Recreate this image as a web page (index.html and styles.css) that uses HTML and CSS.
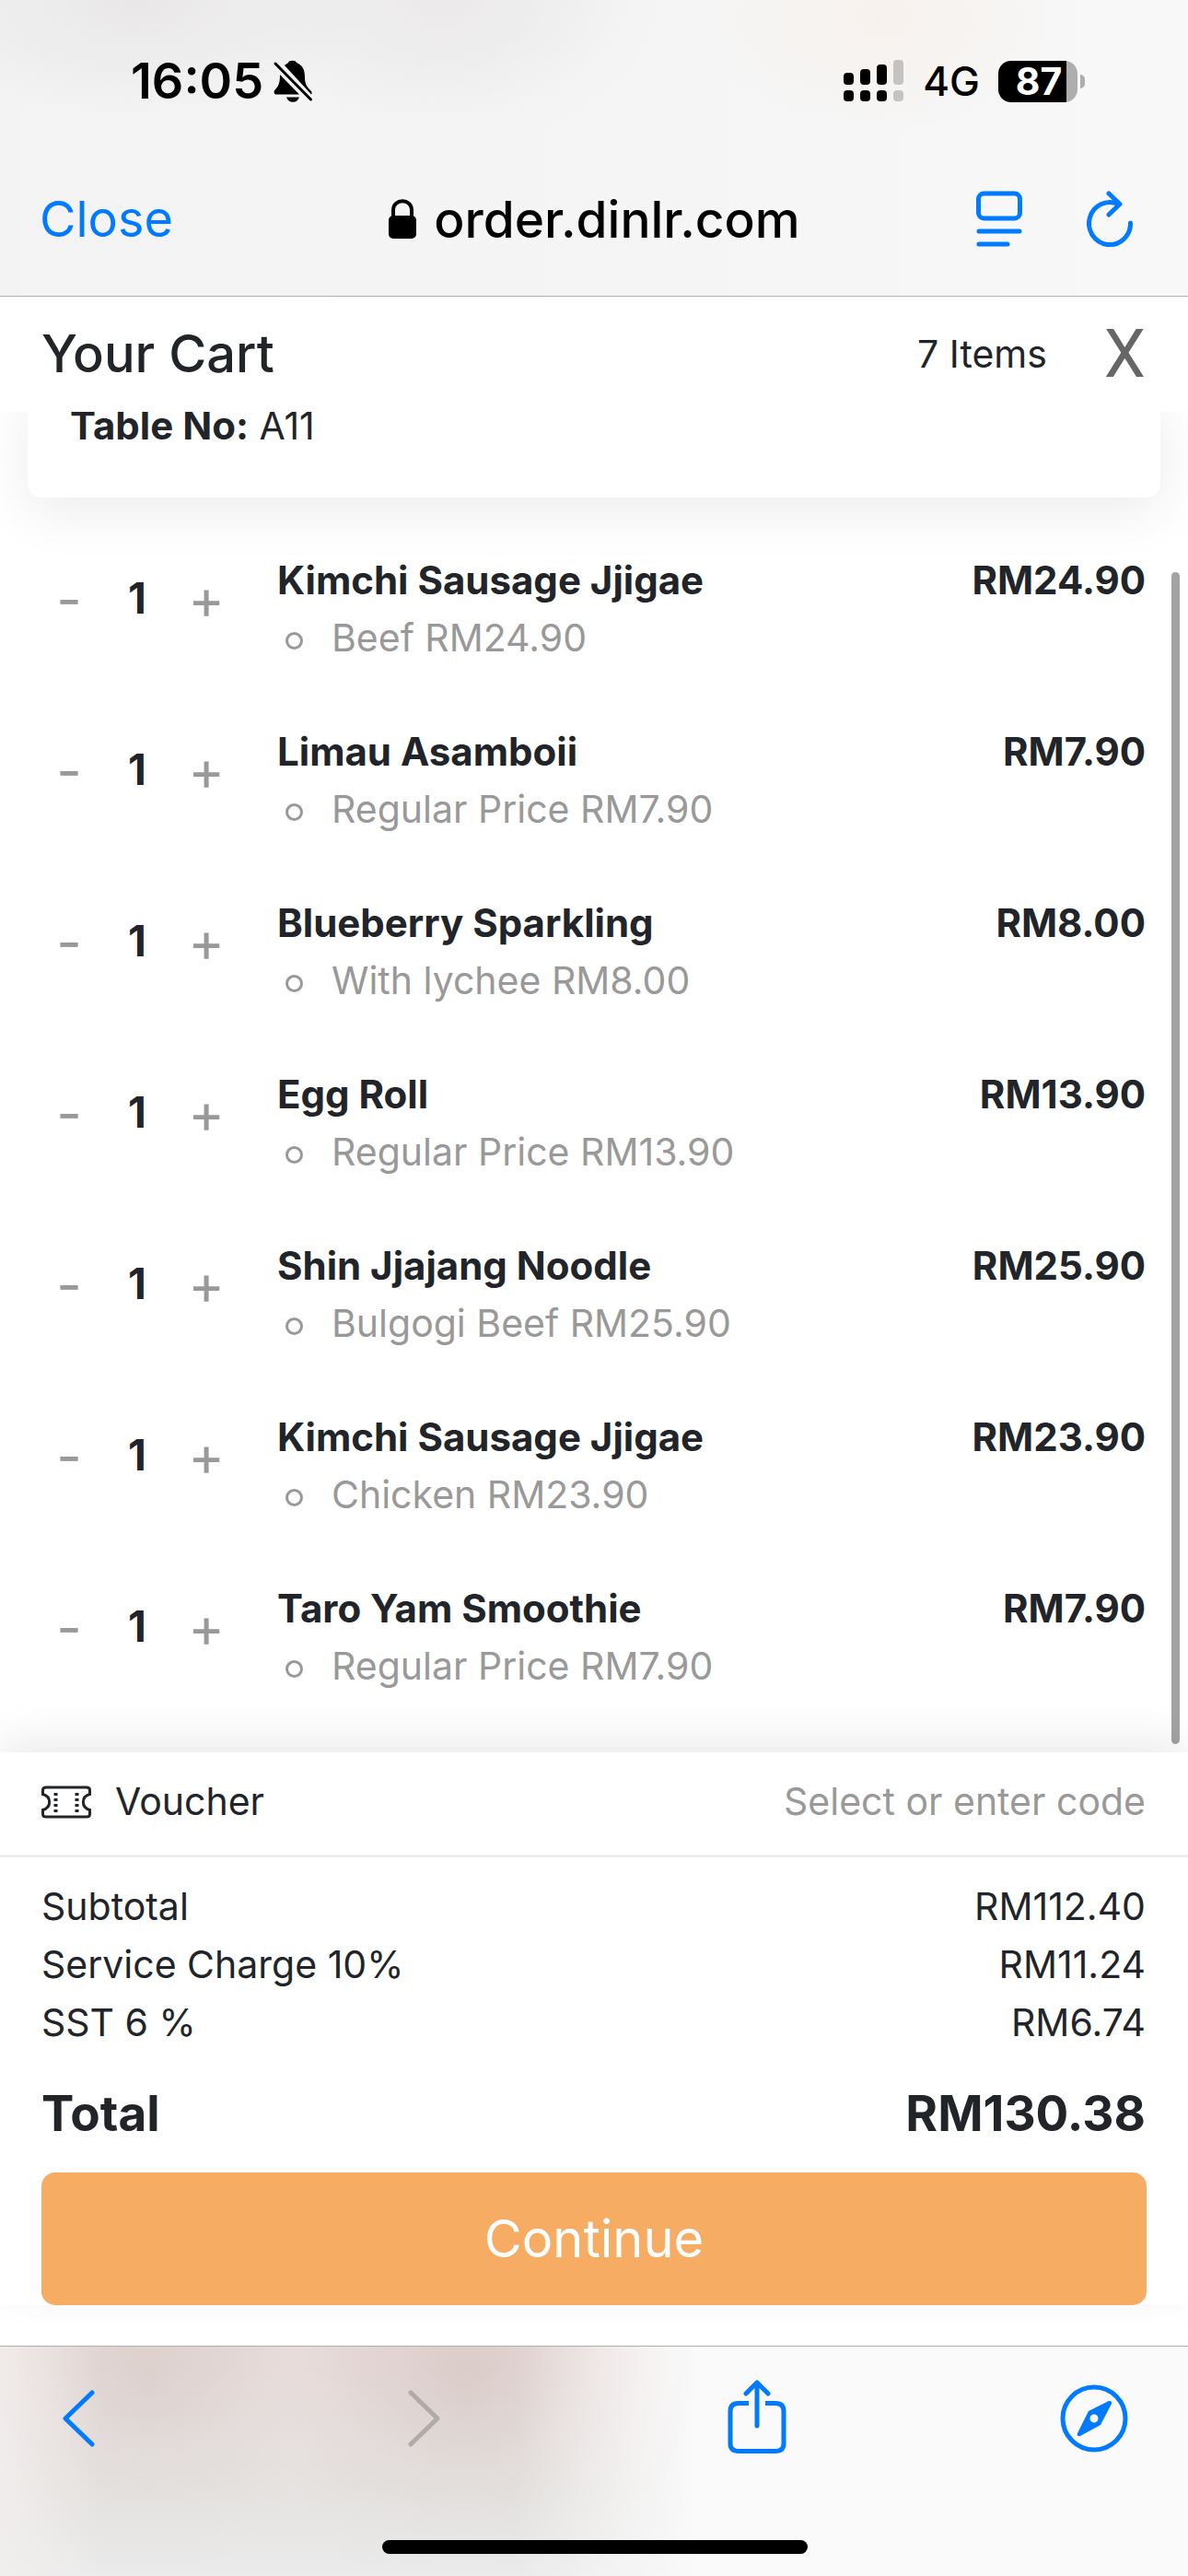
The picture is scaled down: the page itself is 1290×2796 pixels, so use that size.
FILE: index.html
```html
<!DOCTYPE html>
<html lang="en">
<head>
<meta charset="utf-8">
<meta name="viewport" content="width=device-width, initial-scale=1">
<title>Your Cart</title>
<link rel="stylesheet" href="styles.css">
</head>
<body>
<header class="browser-top">
  <div class="status">
    <div class="status-left">
      <span class="clock">16:05</span>
      <svg width="44" height="48" viewBox="0 0 44 48" aria-hidden="true">
        <path d="M13 7 C15 5 16.500 5 17 4 C18 1 25 1 26 4 C33 7 35 12 35 20 C35 27 37 30 42 35 C43 37 42.500 38 42 38.500 Z" fill="#000"/>
        <path d="M8 17 L29 38.500 H4 C1 38.500 1 35 3 33 C7 29 8 25 8 17 Z" fill="#000"/>
        <path d="M15 41.500 H29 C27 48.500 17 48.500 15 41.500 Z" fill="#000"/>
        <path d="M3 5 L41.500 44" stroke="#000" stroke-width="3" stroke-linecap="round"/>
      </svg>
    </div>
    <div class="status-right">
      <svg width="66" height="46" viewBox="0 0 66 46" aria-hidden="true">
        <g fill="#000">
          <rect x="0" y="14" width="11" height="13" rx="4"/><rect x="0" y="33" width="11" height="12" rx="4"/>
          <rect x="18" y="10" width="11" height="17" rx="4"/><rect x="18" y="33" width="11" height="12" rx="4"/>
          <rect x="36" y="5" width="11" height="22" rx="4"/><rect x="36" y="33" width="11" height="12" rx="4"/>
        </g>
        <g fill="#c4c3c2"><rect x="54" y="0" width="11" height="27" rx="4"/><rect x="54" y="33" width="11" height="12" rx="4"/></g>
      </svg>
      <span class="network">4G</span>
      <div class="battery"><span class="battery-level">87</span></div>
    </div>
  </div>
  <nav class="address">
    <a class="close-link" href="#">Close</a>
    <div class="site">
      <svg width="32" height="44" viewBox="0 0 32 44" aria-hidden="true">
        <path d="M6 20 V12 C6 -1 26 -1 26 12 V20" fill="none" stroke="#000" stroke-width="4"/>
        <rect x="1" y="18" width="30" height="25" rx="5" fill="#000"/>
      </svg>
      <span>order.dinlr.com</span>
    </div>
    <div class="address-tools">
      <button class="icon-button" aria-label="Reader view">
        <svg width="50" height="62" viewBox="0 0 50 62" fill="none" stroke="#007aff" stroke-width="5" stroke-linecap="round">
          <rect x="2.500" y="3" width="45" height="27" rx="6"/><path d="M3 44 H47 M3 58 H34"/>
        </svg>
      </button>
      <button class="icon-button" aria-label="Reload">
        <svg width="50" height="62" viewBox="0 0 50 62" fill="none" stroke="#007aff" stroke-width="5" stroke-linecap="round" stroke-linejoin="round">
          <path d="M47.500 35 A22.500 23 0 1 1 34 14.500"/><path d="M24 3 L36 14.500 L24 26"/>
        </svg>
      </button>
    </div>
  </nav>
</header>

<div class="cart-head">
  <h1>Your Cart</h1>
  <span class="count">7 Items</span>
  <button class="dismiss" aria-label="Close cart">X</button>
</div>

<main class="cart-body">
  <section class="table-card"><strong>Table No:</strong> A11</section>
  <ul class="items">
    <li class="item">
      <div class="qty"><button aria-label="Remove one">-</button><span>1</span><button aria-label="Add one">+</button></div>
      <div class="dish"><h2>Kimchi Sausage Jjigae</h2><ul><li>Beef RM24.90</li></ul></div>
      <strong>RM24.90</strong>
    </li>
    <li class="item">
      <div class="qty"><button aria-label="Remove one">-</button><span>1</span><button aria-label="Add one">+</button></div>
      <div class="dish"><h2>Limau Asamboii</h2><ul><li>Regular Price RM7.90</li></ul></div>
      <strong>RM7.90</strong>
    </li>
    <li class="item">
      <div class="qty"><button aria-label="Remove one">-</button><span>1</span><button aria-label="Add one">+</button></div>
      <div class="dish"><h2>Blueberry Sparkling</h2><ul><li>With lychee RM8.00</li></ul></div>
      <strong>RM8.00</strong>
    </li>
    <li class="item">
      <div class="qty"><button aria-label="Remove one">-</button><span>1</span><button aria-label="Add one">+</button></div>
      <div class="dish"><h2>Egg Roll</h2><ul><li>Regular Price RM13.90</li></ul></div>
      <strong>RM13.90</strong>
    </li>
    <li class="item">
      <div class="qty"><button aria-label="Remove one">-</button><span>1</span><button aria-label="Add one">+</button></div>
      <div class="dish"><h2>Shin Jjajang Noodle</h2><ul><li>Bulgogi Beef RM25.90</li></ul></div>
      <strong>RM25.90</strong>
    </li>
    <li class="item">
      <div class="qty"><button aria-label="Remove one">-</button><span>1</span><button aria-label="Add one">+</button></div>
      <div class="dish"><h2>Kimchi Sausage Jjigae</h2><ul><li>Chicken RM23.90</li></ul></div>
      <strong>RM23.90</strong>
    </li>
    <li class="item">
      <div class="qty"><button aria-label="Remove one">-</button><span>1</span><button aria-label="Add one">+</button></div>
      <div class="dish"><h2>Taro Yam Smoothie</h2><ul><li>Regular Price RM7.90</li></ul></div>
      <strong>RM7.90</strong>
    </li>
  </ul>
  <div class="scroll-thumb"></div>
</main>

<section class="checkout">
  <div class="voucher">
    <svg width="54" height="36" viewBox="0 0 54 36" fill="none" stroke="#212529" aria-hidden="true">
      <path d="M5 2 H49 Q52.500 2 52.500 5 V9.500 C43 12 43 24 52.500 26.500 V31 Q52.500 34 49 34 H5 Q1.500 34 1.500 31 V26.500 C11 24 11 12 1.500 9.500 V5 Q1.500 2 5 2 Z" stroke-width="3"/>
      <path d="M15.500 8 V31 M38.500 8 V31" stroke-width="4" stroke-dasharray="3 3"/>
    </svg>
    <label for="voucher-code">Voucher</label>
    <input id="voucher-code" type="text" placeholder="Select or enter code">
  </div>
  <dl class="summary">
    <div><dt>Subtotal</dt><dd>RM112.40</dd></div>
    <div><dt>Service Charge 10%</dt><dd>RM11.24</dd></div>
    <div><dt>SST 6 %</dt><dd>RM6.74</dd></div>
    <div class="total"><dt>Total</dt><dd>RM130.38</dd></div>
  </dl>
  <div class="action"><button class="continue">Continue</button></div>
</section>

<footer class="browser-bottom">
  <nav class="toolbar">
    <button class="icon-button" aria-label="Back">
      <svg width="36" height="84" viewBox="0 0 36 84" fill="none" stroke="#007aff" stroke-width="5" stroke-linecap="round" stroke-linejoin="round"><path d="M33 14 L4 42 L33 70"/></svg>
    </button>
    <button class="icon-button" aria-label="Forward" disabled>
      <svg width="36" height="84" viewBox="0 0 36 84" fill="none" stroke="#b2aaa8" stroke-width="5" stroke-linecap="round" stroke-linejoin="round"><path d="M3 14 L32 42 L3 70"/></svg>
    </button>
    <button class="icon-button" aria-label="Share">
      <svg width="64" height="84" viewBox="0 0 64 84" fill="none" stroke="#007aff" stroke-width="5" stroke-linecap="round" stroke-linejoin="round">
        <path d="M23 25.500 H12 Q3 25.500 3 34 V69 Q3 77.500 12 77.500 H52 Q61 77.500 61 69 V34 Q61 25.500 52 25.500 H41" stroke-linecap="butt"/>
        <path d="M32 3 V50 M20 15 L32 3 L44 15"/>
      </svg>
    </button>
    <button class="icon-button" aria-label="Open in browser">
      <svg width="74" height="84" viewBox="0 0 74 84">
        <circle cx="37" cy="42" r="34" fill="none" stroke="#007aff" stroke-width="5"/>
        <path d="M19 58 L31 34 L53 23 Q56.500 22.500 56 26 L44 49 L22 61 Q18 62 19 58 Z M37 37.500 A4.500 4.500 0 1 0 37 46.500 A4.500 4.500 0 1 0 37 37.500 Z" fill="#007aff" fill-rule="evenodd"/>
      </svg>
    </button>
  </nav>
  <div class="home-bar"></div>
</footer>
</body>
</html>
```
FILE: styles.css
```css
*, *::before, *::after { box-sizing: border-box; }

body {
  margin: 0;
  min-height: 100vh;
  display: flex;
  flex-direction: column;
  background: #fff;
  color: #212529;
  font-family: Inter, "Liberation Sans", sans-serif;
  font-size: 41px;
  line-height: 63px;
}

h1, h2, ul, dl, dd { margin: 0; padding: 0; }
ul { list-style: none; }
button { border: 0; padding: 0; background: none; font: inherit; color: inherit; }
svg { display: block; }
strong { font-size: 42px; font-weight: 700; }
.icon-button { display: flex; }

/* Browser chrome, top */
.browser-top {
  padding: 58px 43px 41px;
  border-bottom: 1px solid #b0b0b0;
  background:
    radial-gradient(ellipse 260px 130px at 150px 0, #e9e7e7, transparent),
    radial-gradient(ellipse 240px 150px at 480px 0, #ebe9e9, transparent),
    radial-gradient(ellipse 200px 120px at 960px 20px, #f7f1ed, transparent),
    linear-gradient(90deg, #f3f3f3, #f5f5f5 50%, #f8f8f8);
  color: #000;
}
.status {
  display: flex;
  justify-content: space-between;
  align-items: center;
  padding: 0 77px 0 99px;
  line-height: 60px;
}
.status-left { display: flex; align-items: center; gap: 10px; }
.clock { font-size: 54px; font-weight: 600; }
.status-right { display: flex; align-items: center; gap: 20px; }
.network { font-size: 44px; font-weight: 500; }
.battery {
  position: relative;
  width: 86px;
  height: 45px;
  padding-left: 2px;
  border-radius: 14px;
  background: linear-gradient(90deg, #000 74px, #aeaeae 74px);
  color: #fff;
  font-size: 41px;
  font-weight: 700;
  line-height: 45px;
  text-align: center;
}
.battery::after {
  content: "";
  position: absolute;
  top: 15px;
  right: -8px;
  width: 5px;
  height: 15px;
  border-radius: 0 5px 5px 0;
  background: #aeaeae;
}
.address {
  display: grid;
  grid-template-columns: 1fr auto 1fr;
  align-items: center;
  margin-top: 78px;
  font-size: 54px;
  line-height: 84px;
}
.close-link { color: #007aff; text-decoration: none; }
.site { display: flex; align-items: center; gap: 18px; font-size: 55px; font-weight: 500; }
.address-tools {
  display: flex;
  justify-content: flex-end;
  gap: 70px;
  padding-right: 17px;
}

.cart-head {
  position: relative;
  z-index: 1;
  display: flex;
  align-items: center;
  height: 125px;
  padding: 0 46px 0 45px;
  background: #fff;
}
.cart-head h1 { flex: 1; font-size: 56px; font-weight: 500; }
.dismiss {
  margin-left: 62px;
  color: #666;
  font-family: Roboto, sans-serif;
  font-size: 72px;
}

/* Scrolling list */
.cart-body { position: relative; flex: 1; }
.table-card {
  margin: -24px 30px 0;
  padding: 24px 46px 63px;
  border-radius: 15px;
  background: #fff;
  box-shadow: 0 15px 60px rgba(0, 0, 0, 0.08);
  line-height: 30px;
}
.items {
  display: flex;
  flex-direction: column;
  gap: 60px;
  padding: 58px 46px 62px;
}
.item { display: grid; grid-template-columns: 255px 1fr auto; align-items: start; }
.item h2 { font-size: 42px; font-weight: 700; }
.qty {
  display: grid;
  grid-template-columns: 58px 90px 60px;
  margin-top: 20px;
  font-size: 46px;
  text-align: center;
}
.qty span { font-weight: 700; }
.qty button { color: #999; font-size: 60px; line-height: 60px; }
.dish li { display: flex; align-items: center; color: #999; }
.dish li::before {
  content: "";
  width: 19px;
  height: 19px;
  margin: 6px 31px 0 9px;
  border: 3px solid #999;
  border-radius: 50%;
}
.scroll-thumb {
  position: absolute;
  top: 174px;
  right: 9px;
  bottom: 9px;
  width: 9px;
  border-radius: 5px;
  background: #a3a3a3;
}

/* Checkout panel */
.checkout {
  position: relative;
  margin-bottom: 44px;
  background: #fff;
  box-shadow: 0 -14px 42px rgba(0, 0, 0, 0.08);
}
.voucher {
  display: flex;
  align-items: center;
  padding: 22px 46px 26px 45px;
  border-bottom: 3px solid #ededed;
}
.voucher label { margin-left: 26px; }
.voucher input {
  flex: 1;
  min-width: 0;
  height: 63px;
  padding: 0;
  border: 0;
  background: none;
  font: inherit;
  text-align: right;
}
.voucher input::placeholder { color: #999; opacity: 1; }
.summary { padding: 22px 46px 25px 45px; }
.summary div { display: flex; justify-content: space-between; }
.summary .total {
  margin-top: 28px;
  font-size: 53px;
  font-weight: 700;
  line-height: 78px;
}
.action { padding: 0 45px; }
.continue {
  display: block;
  width: 100%;
  height: 144px;
  border-radius: 15px;
  background: #f6ac62;
  color: #fff;
  font-size: 56px;
}

/* Browser chrome, bottom */
.browser-bottom {
  padding: 36px 65px 24px 67px;
  border-top: 1px solid #aeaeae;
  background:
    linear-gradient(90deg, transparent 560px, rgba(250, 250, 250, 0.5) 660px, #fafafa 760px),
    linear-gradient(90deg, rgba(244, 241, 240, 0.7), transparent 110px),
    linear-gradient(180deg, transparent 10%, rgba(228, 229, 227, 0.7) 65%, #ebebeb),
    radial-gradient(ellipse 180px 280px at 160px 40px, rgba(208, 194, 189, 0.5), transparent),
    radial-gradient(ellipse 200px 320px at 505px 60px, rgba(206, 188, 183, 0.55), transparent),
    #e9dedd;
}
.toolbar {
  display: grid;
  grid-template-columns: 376fr 347fr 361fr auto;
  justify-items: start;
}
.home-bar {
  width: 462px;
  height: 15px;
  margin: 90px auto 0;
  border-radius: 8px;
  background: #000;
}
```
